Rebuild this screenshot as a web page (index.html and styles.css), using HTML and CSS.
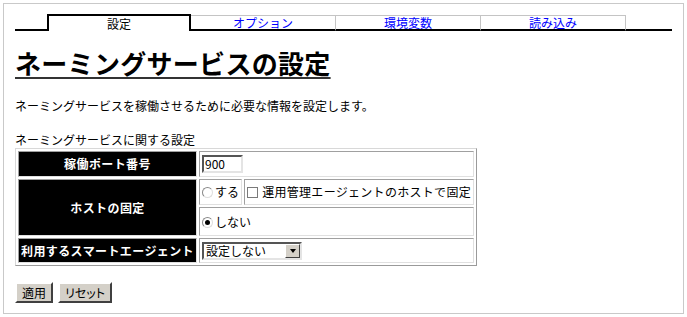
FILE: index.html
```html
<!DOCTYPE html>
<html lang="ja">
<head>
<meta charset="utf-8">
<title>ネーミングサービスの設定</title>
<link rel="stylesheet" href="styles.css">
</head>
<body>
<div class="frame">
  <div class="tabs">
    <div class="tab-spacer"></div>
    <div class="tab active">設定</div>
    <div class="tab">オプション</div>
    <div class="tab">環境変数</div>
    <div class="tab">読み込み</div>
    <div class="tab-fill"></div>
  </div>

  <h1 class="title">ネーミングサービスの設定</h1>
  <p class="desc">ネーミングサービスを稼働させるために必要な情報を設定します。</p>
  <p class="caption">ネーミングサービスに関する設定</p>

  <table class="form">
    <tr class="r1">
      <th>稼働ポート番号</th>
      <td colspan="2"><span class="textbox">900</span></td>
    </tr>
    <tr class="r2">
      <th rowspan="2">ホストの固定</th>
      <td class="c-yes"><span class="radio"></span>する</td>
      <td class="c-chk"><span class="check"></span> 運用管理エージェントのホストで固定</td>
    </tr>
    <tr class="r3">
      <td colspan="2" class="c-no"><span class="radio on"></span>しない</td>
    </tr>
    <tr class="r4">
      <th>利用するスマートエージェント</th>
      <td colspan="2"><span class="select"><span class="sel-text">設定しない</span><span class="sel-btn"><span class="tri"></span></span></span></td>
    </tr>
  </table>

  <div class="buttons">
    <span class="btn">適用</span>
    <span class="btn">リセット</span>
  </div>
</div>
</body>
</html>
```

FILE: styles.css
```css
html, body {
  margin: 0;
  padding: 0;
  background: #fff;
}
body {
  font-family: "Noto Sans CJK JP", "Liberation Sans", sans-serif;
  font-size: 12px;
  color: #000;
}
.frame {
  margin: 3px;
  height: 311px;
  box-sizing: border-box;
  border: 1px solid #c9c9c9;
  padding: 10px 11px 0 11px;
}

/* tabs */
.tabs {
  display: flex;
  align-items: flex-end;
}
.tab-spacer {
  width: 32px;
  border-bottom: 2px solid #000;
}
.tab-fill {
  flex: 1;
  border-bottom: 2px solid #000;
}
.tab {
  box-sizing: border-box;
  width: 145px;
  height: 16px;
  border-top: 1px solid #c4c4c4;
  border-right: 1px solid #c4c4c4;
  border-bottom: 2px solid #000;
  color: #0000ff;
  text-align: center;
  line-height: 13px;
}
.tab.active {
  width: 144px;
  height: 17px;
  border: 2px solid #000;
  border-bottom: none;
  color: #000;
  line-height: 15px;
}

/* headings */
.title {
  margin: 17px 0 0 0;
  font-size: 26px;
  line-height: 30px;
  font-weight: bold;
  letter-spacing: 0.3px;
  text-decoration: underline;
  text-decoration-thickness: 2px;
  text-underline-offset: 3px;
  text-decoration-color: #333;
}
.desc {
  margin: 20px 0 0 0;
  line-height: 16px;
}
.caption {
  margin: 18px 0 0 0;
  line-height: 16px;
}

/* form table */
.form {
  width: 462px;
  border-collapse: separate;
  border-spacing: 2px;
  border: 1px solid;
  border-color: #d8d8d8 #9a9a9a #9a9a9a #d8d8d8;
}
.form th,
.form td {
  border: 1px solid;
  border-color: #a0a0a0 #e0e0e0 #e0e0e0 #a0a0a0;
  padding: 0 2px;
  line-height: 16px;
  white-space: nowrap;
}
.form th {
  width: 171px;
  background: #000;
  color: #fff;
  font-weight: bold;
  letter-spacing: 0.4px;
  text-align: center;
}
.form td {
  text-align: left;
}
.r1 { height: 26px; }
.r2 { height: 26px; }
.r3 { height: 29px; }
.r4 { height: 25px; }
.c-yes { width: 42px; padding-left: 5px; }
.c-chk { padding-left: 5px; letter-spacing: 0.3px; }
.c-no { padding-left: 9px; }

.textbox {
  display: inline-block;
  vertical-align: middle;
  box-sizing: border-box;
  width: 41px;
  height: 18px;
  border: 2px solid;
  border-color: #555 #e4e4e4 #e4e4e4 #555;
  padding-left: 1px;
  line-height: 14px;
  font-size: 12px;
}

.radio {
  display: inline-block;
  vertical-align: middle;
  position: relative;
  box-sizing: border-box;
  width: 11px;
  height: 11px;
  border-radius: 50%;
  border: 1px solid;
  border-color: #888 #ddd #ddd #888;
  background: #fff;
  margin: -2px 2px 0 0;
}
.radio.on::after {
  content: "";
  position: absolute;
  left: 2px;
  top: 2px;
  width: 5px;
  height: 5px;
  border-radius: 50%;
  background: #000;
}
.check {
  display: inline-block;
  vertical-align: middle;
  box-sizing: border-box;
  width: 11px;
  height: 11px;
  border: 1px solid #7a7a7a;
  background: #fff;
  margin: -2px 1px 0 0;
}

.select {
  display: inline-flex;
  vertical-align: middle;
  box-sizing: border-box;
  width: 100px;
  height: 18px;
  border: 2px solid;
  border-color: #555 #e4e4e4 #e4e4e4 #555;
  background: #fff;
}
.sel-text {
  flex: 1;
  padding-left: 2px;
  line-height: 14px;
}
.sel-btn {
  box-sizing: border-box;
  width: 15px;
  height: 14px;
  background: #d4d0c8;
  border: 1px solid;
  border-color: #fff #404040 #404040 #fff;
  display: flex;
  align-items: center;
  justify-content: center;
}
.tri {
  width: 0;
  height: 0;
  border-left: 3px solid transparent;
  border-right: 3px solid transparent;
  border-top: 4px solid #000;
}

/* buttons */
.buttons {
  margin-top: 16px;
  display: flex;
  gap: 5px;
}
.btn {
  box-sizing: border-box;
  height: 21px;
  padding: 0 5px;
  background: #d4d0c8;
  border: 2px solid;
  border-color: #fff #404040 #404040 #fff;
  line-height: 17px;
  font-size: 12px;
  font-feature-settings: "palt";
}
```
